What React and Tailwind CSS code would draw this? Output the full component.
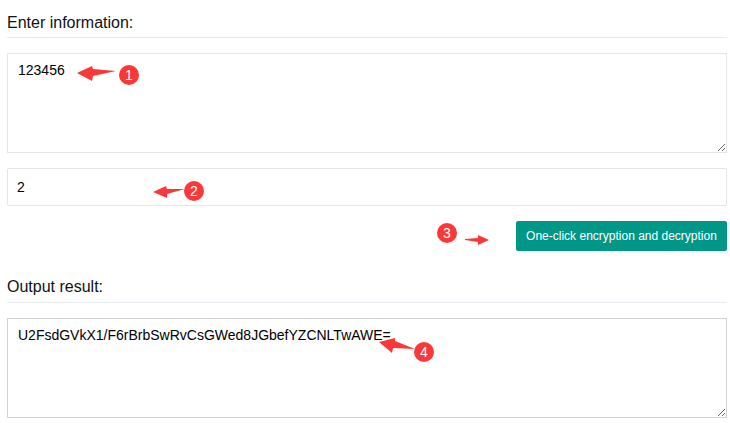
const FONT = 'font-["Liberation_Sans",Arial,sans-serif]'

function Marker({ n, className, arrow, viewBox, style }) {
  return (
    <>
      <svg className={`absolute ${style}`} viewBox={viewBox} fill="#fb3838">
        <polygon points={arrow} />
      </svg>
      <div className={`absolute flex h-5 w-5 items-center justify-center rounded-full bg-[#fb3838] text-[14px] text-white ${className}`}>
        {n}
      </div>
    </>
  )
}

function Heading({ children, className }) {
  return (
    <div className={`border-b border-[#e8ecf1] text-[16px] leading-[30px] text-[#111] ${className}`}>
      {children}
    </div>
  )
}

export default function App() {
  return (
    <div className={`relative h-[423px] w-[730px] overflow-hidden bg-white pl-[7px] pr-[3px] pt-[8px] ${FONT}`}>
      <Heading className="h-[30px]">Enter information:</Heading>
      <textarea
        readOnly
        defaultValue="123456"
        className="mt-[15px] block h-[100px] w-full border border-[#e6e6e6] px-[10px] py-[6px] text-[14px] leading-[20px] text-black outline-none"
      />
      <input
        readOnly
        defaultValue="2"
        className="mt-[15px] block h-[38px] w-full rounded-[2px] border border-[#e6e6e6] px-[9px] text-[14px] text-black outline-none"
      />
      <div className="mt-[15px] flex justify-end">
        <button className="h-[30px] w-[211px] rounded-[2px] bg-[#009688] text-[12px] text-white">
          One-click encryption and decryption
        </button>
      </div>
      <div className="mt-[21px]">
        <Heading className="h-[31px]">Output result:</Heading>
      </div>
      <textarea
        readOnly
        defaultValue="U2FsdGVkX1/F6rBrbSwRvCsGWed8JGbefYZCNLTwAWE="
        className="mt-[15px] block h-[100px] w-full border border-[#d2d2d2] px-[10px] py-[6px] text-[14px] leading-[20px] text-black outline-none"
      />

      <Marker n={1} className="left-[119px] top-[65px]" style="left-[77px] top-[66px] h-[15px] w-[40px]" viewBox="0 0 40 15" arrow="0,7 15,0 16,3 39,5 16,10 15,15" />
      <Marker n={2} className="left-[184px] top-[181px]" style="left-[153px] top-[185px] h-[13px] w-[32px]" viewBox="0 0 32 13" arrow="0,7 13,1 14,4 32,4 14,9 14,13" />
      <Marker n={3} className="left-[437px] top-[223px]" style="left-[465px] top-[235px] h-[10px] w-[24px]" viewBox="0 0 24 10" arrow="24,5 13,0 13,3 0,4 0,5 13,7 13,10" />
      <Marker n={4} className="left-[414px] top-[342px]" style="left-[379px] top-[338px] h-[15px] w-[36px]" viewBox="0 0 36 15" arrow="0,4 16,0 16,3 36,11 14,10 13,15" />
    </div>
  )
}
